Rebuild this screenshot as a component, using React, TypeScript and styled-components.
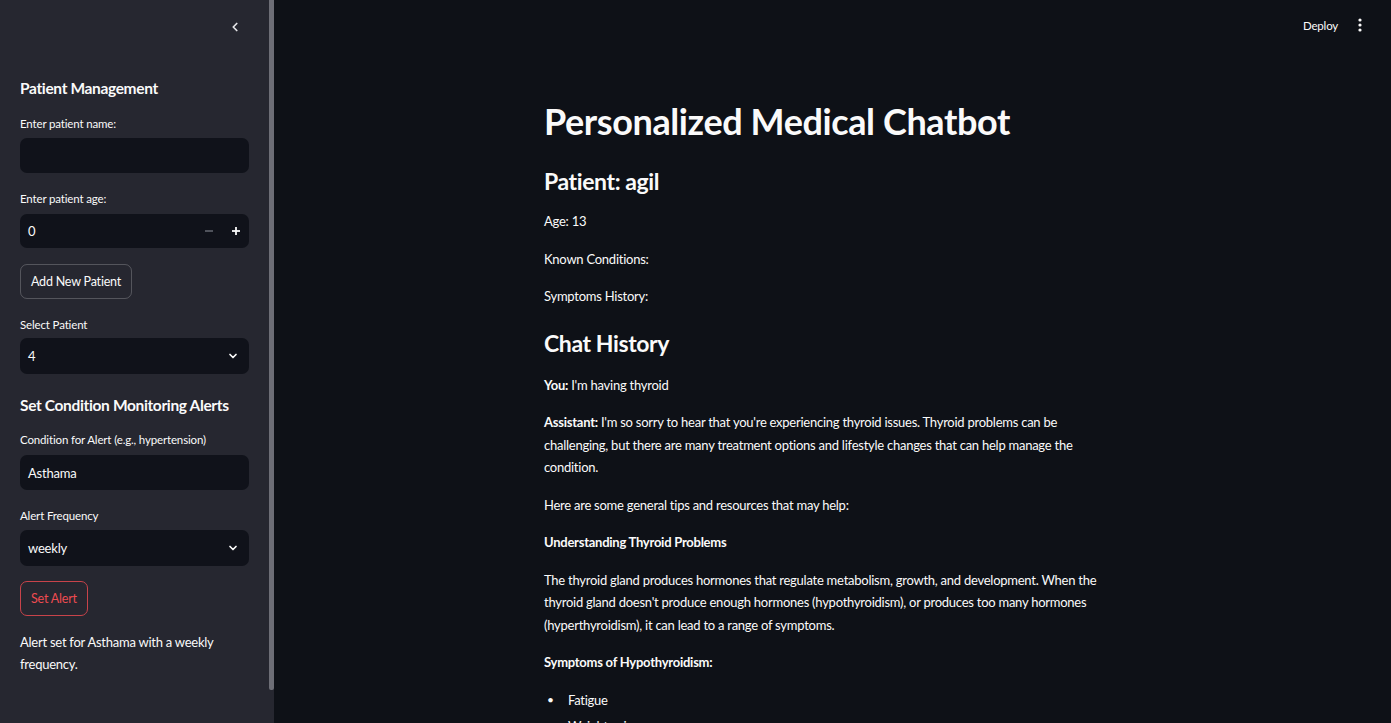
import React from "react";
import styled, { createGlobalStyle } from "styled-components";

const FONT = `Lato, "Noto Sans", sans-serif`;

const Global = createGlobalStyle`
  html, body { margin: 0; padding: 0; background: #0e1117; }
  body { font-family: ${FONT}; color: #fafafa; -webkit-font-smoothing: antialiased; }
  * { box-sizing: border-box; }
`;

const Shell = styled.div`
  display: flex;
  width: 100%;
  height: 100vh;
  overflow: hidden;
  background: #0e1117;
`;

const Sidebar = styled.aside`
  position: relative;
  flex: 0 0 274px;
  height: 100%;
  background: #262730;
  display: flex;
  flex-direction: column;
  padding: 0 25px 0 20px;
`;

const ScrollThumb = styled.div`
  position: absolute;
  top: 0;
  right: 0;
  width: 5px;
  height: 690px;
  background: #6d6e76;
  border-radius: 0 0 2px 2px;
`;

const CollapseRow = styled.div`
  flex-shrink: 0;
  height: 54px;
  display: flex;
  align-items: center;
  justify-content: flex-end;
  padding-right: 7px;
  color: #e4e4e7;
`;

const SideHeading = styled.h3<{ $top: number }>`
  margin: ${(p) => p.$top}px 0 0;
  font-size: 15.5px;
  line-height: 20px;
  font-weight: 700;
  color: #fafafa;
  letter-spacing: -0.35px;
`;

const Field = styled.div<{ $top: number }>`
  margin-top: ${(p) => p.$top}px;
  display: flex;
  flex-direction: column;
`;

const Label = styled.label<{ $gap: number }>`
  font-size: 11.5px;
  line-height: 16px;
  letter-spacing: -0.15px;
  color: #fafafa;
  margin-bottom: ${(p) => p.$gap}px;
`;

const InputBox = styled.div<{ $h: number; $padRight?: number }>`
  flex-shrink: 0;
  height: ${(p) => p.$h}px;
  background: #10121a;
  border-radius: 7px;
  display: flex;
  align-items: center;
  padding: 0 ${(p) => p.$padRight ?? 10}px 0 8px;
  font-size: 13px;
  letter-spacing: -0.2px;
  color: #fafafa;
`;

const InputText = styled.span`
  flex: 1;
`;

const StepBtn = styled.span<{ $dim?: boolean }>`
  width: 27px;
  display: flex;
  justify-content: center;
  align-items: center;
  color: ${(p) => (p.$dim ? "#6c6e78" : "#fafafa")};
`;

const Button = styled.button<{ $top: number; $danger?: boolean }>`
  flex-shrink: 0;
  margin-top: ${(p) => p.$top}px;
  align-self: flex-start;
  height: 35px;
  padding: 0 10px;
  border-radius: 7px;
  background: transparent;
  font-family: ${FONT};
  font-size: 12.5px;
  letter-spacing: -0.2px;
  border: 1px solid ${(p) => (p.$danger ? "#c8434a" : "rgba(250,250,250,0.22)")};
  color: ${(p) => (p.$danger ? "#ef4b50" : "#fafafa")};
`;

const SideText = styled.p`
  margin: 15px 0 0;
  font-size: 13px;
  line-height: 22px;
  letter-spacing: -0.25px;
  color: #fafafa;
`;

const Main = styled.main`
  flex: 1;
  height: 100%;
  display: flex;
  flex-direction: column;
  background: #0e1117;
`;

const Header = styled.header`
  flex-shrink: 0;
  height: 50px;
  display: flex;
  align-items: center;
  justify-content: flex-end;
  padding-right: 29px;
  gap: 20px;
`;

const Deploy = styled.span`
  font-size: 11.5px;
  letter-spacing: -0.2px;
  color: #fafafa;
`;

const Kebab = styled.span`
  display: flex;
  color: #fafafa;
`;

const Content = styled.div`
  flex-shrink: 0;
  width: 577px;
  margin: 0 auto;
  padding-top: 48px;
`;

const Title = styled.h1`
  margin: 0;
  font-size: 36px;
  line-height: 46px;
  font-weight: 700;
  letter-spacing: -0.4px;
`;

const H3 = styled.h3<{ $top: number; $bottom: number }>`
  margin: ${(p) => p.$top}px 0 ${(p) => p.$bottom}px;
  font-size: 23px;
  line-height: 30px;
  font-weight: 700;
  letter-spacing: -0.4px;
`;

const P = styled.p`
  margin: 0 0 15px;
  font-size: 13px;
  line-height: 22.5px;
  letter-spacing: -0.25px;
  color: #fafafa;
`;

const List = styled.ul`
  margin: 0;
  padding: 0;
  list-style: none;
  font-size: 13px;
  line-height: 22.5px;
  letter-spacing: -0.25px;
`;

const Item = styled.li`
  display: flex;
  margin-bottom: 4px;
  &::before {
    content: "•";
    flex: 0 0 21px;
    padding-left: 3px;
    font-size: 12px;
  }
`;

const Chevron = ({ dir }: { dir: "left" | "down" }) =>
  dir === "left" ? (
    <svg width="14" height="14" viewBox="0 0 24 24" fill="none" stroke="currentColor" strokeWidth="3" strokeLinecap="round" strokeLinejoin="round">
      <path d="M15 18l-6-6 6-6" />
    </svg>
  ) : (
    <svg width="12" height="12" viewBox="0 0 24 24" fill="none" stroke="currentColor" strokeWidth="3.4" strokeLinecap="round" strokeLinejoin="round">
      <path d="M6 9l6 6 6-6" />
    </svg>
  );

export default function App() {
  return (
    <>
      <Global />
      <Shell>
        <Sidebar>
          <ScrollThumb />
          <CollapseRow>
            <Chevron dir="left" />
          </CollapseRow>
          <SideHeading $top={24}>Patient Management</SideHeading>
          <Field $top={18}>
            <Label $gap={6}>Enter patient name:</Label>
            <InputBox $h={35} />
          </Field>
          <Field $top={18}>
            <Label $gap={7}>Enter patient age:</Label>
            <InputBox $h={34} $padRight={0}>
              <InputText>0</InputText>
              <StepBtn $dim>
                <svg width="10" height="10" viewBox="0 0 10 10"><rect x="1" y="4.3" width="8" height="1.4" fill="currentColor" /></svg>
              </StepBtn>
              <StepBtn>
                <svg width="10" height="10" viewBox="0 0 10 10"><rect x="1" y="4.1" width="8" height="1.8" fill="currentColor" /><rect x="4.1" y="1" width="1.8" height="8" fill="currentColor" /></svg>
              </StepBtn>
            </InputBox>
          </Field>
          <Button $top={16}>Add New Patient</Button>
          <Field $top={18}>
            <Label $gap={5}>Select Patient</Label>
            <InputBox $h={36}>
              <InputText>4</InputText>
              <Chevron dir="down" />
            </InputBox>
          </Field>
          <SideHeading $top={21}>Set Condition Monitoring Alerts</SideHeading>
          <Field $top={17}>
            <Label $gap={7}>Condition for Alert (e.g., hypertension)</Label>
            <InputBox $h={35}>
              <InputText>Asthama</InputText>
            </InputBox>
          </Field>
          <Field $top={18}>
            <Label $gap={6}>Alert Frequency</Label>
            <InputBox $h={36}>
              <InputText>weekly</InputText>
              <Chevron dir="down" />
            </InputBox>
          </Field>
          <Button $top={15} $danger>Set Alert</Button>
          <SideText>Alert set for Asthama with a weekly frequency.</SideText>
        </Sidebar>
        <Main>
          <Header>
            <Deploy>Deploy</Deploy>
            <Kebab>
              <svg width="4" height="14" viewBox="0 0 4 14"><circle cx="2" cy="2" r="1.6" fill="currentColor" /><circle cx="2" cy="7" r="1.6" fill="currentColor" /><circle cx="2" cy="12" r="1.6" fill="currentColor" /></svg>
            </Kebab>
          </Header>
          <Content>
            <Title>Personalized Medical Chatbot</Title>
            <H3 $top={22} $bottom={14}>Patient: agil</H3>
            <P>Age: 13</P>
            <P>Known Conditions:</P>
            <P>Symptoms History:</P>
            <H3 $top={20} $bottom={16}>Chat History</H3>
            <P><strong>You:</strong> I'm having thyroid</P>
            <P>
              <strong>Assistant:</strong> I'm so sorry to hear that you're experiencing thyroid issues. Thyroid problems can be challenging, but there are many treatment options and lifestyle changes that can help manage the condition.
            </P>
            <P>Here are some general tips and resources that may help:</P>
            <P><strong>Understanding Thyroid Problems</strong></P>
            <P>
              The thyroid gland produces hormones that regulate metabolism, growth, and development. When the thyroid gland doesn't produce enough hormones (hypothyroidism), or produces too many hormones (hyperthyroidism), it can lead to a range of symptoms.
            </P>
            <P><strong>Symptoms of Hypothyroidism:</strong></P>
            <List>
              <Item>Fatigue</Item>
              <Item>Weight gain</Item>
              <Item>Dry skin</Item>
            </List>
          </Content>
        </Main>
      </Shell>
    </>
  );
}
